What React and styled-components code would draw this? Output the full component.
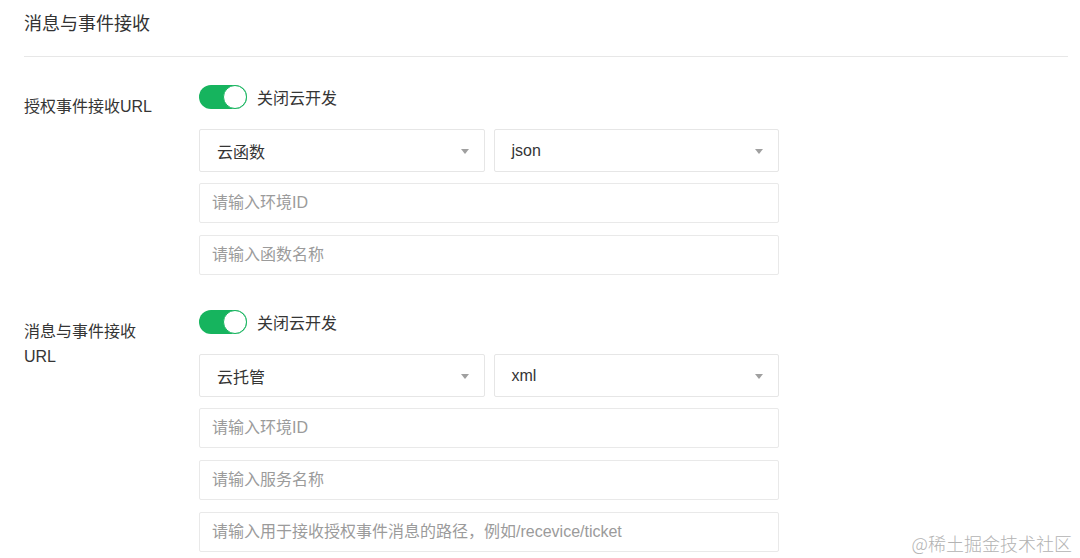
import styled, { createGlobalStyle } from 'styled-components';

const GlobalStyle = createGlobalStyle`
  html, body {
    margin: 0;
    padding: 0;
    background: #fff;
  }
  body {
    font-family: "Liberation Sans", "Noto Sans CJK SC", sans-serif;
    color: #353535;
    overflow: hidden;
  }
`;

const sections = [
  {
    id: 1,
    label: '授权事件接收URL',
    type: '云函数',
    format: 'json',
    inputs: ['请输入环境ID', '请输入函数名称'],
  },
  {
    id: 2,
    label: '消息与事件接收URL',
    type: '云托管',
    format: 'xml',
    inputs: ['请输入环境ID', '请输入服务名称', '请输入用于接收授权事件消息的路径，例如/recevice/ticket'],
    hint: '填写后，将通过云托管服务接收授权事件消息，路径需以 / 开头，请确保对应服务已部署并可以正常访问',
  },
];

const Toggle = ({ on }) => (
  <Switch $on={on}>
    <Knob />
  </Switch>
);

const Select = ({ value }) => (
  <SelectBox>
    <span>{value}</span>
    <Caret />
  </SelectBox>
);

const App = () => {
  return (
    <Page>
      <GlobalStyle />
      <Header>消息与事件接收</Header>
      <Form>
        {sections.map((s) => (
          <Row key={s.id}>
            <Label>{s.label}</Label>
            <Controls>
              <ToggleLine>
                <Toggle on />
                <span>关闭云开发</span>
              </ToggleLine>
              <SelectRow>
                <Select value={s.type} />
                <Select value={s.format} />
              </SelectRow>
              {s.inputs.map((p) => (
                <Input key={p} placeholder={p} />
              ))}
              {s.hint && <Hint>{s.hint}</Hint>}
            </Controls>
          </Row>
        ))}
      </Form>
      <Watermark>@稀土掘金技术社区</Watermark>
    </Page>
  );
};

const Page = styled.div`
  position: relative;
  height: 558px;
  padding: 0 12px 0 24px;
  box-sizing: border-box;
`;

const Header = styled.h2`
  margin: 0;
  padding: 10px 0 18px;
  line-height: 28px;
  font-size: 18px;
  font-weight: 400;
  color: #333;
  border-bottom: 1px solid #e7e7e7;
`;

const Form = styled.div`
  display: flex;
  flex-direction: column;
  gap: 35px;
  padding-top: 28px;
`;

const Row = styled.div`
  display: grid;
  grid-template-columns: 175px 580px;
`;

const Label = styled.div`
  margin-top: 9px;
  width: 136px;
  font-size: 16px;
  line-height: 25px;
  color: #353535;
`;

const Controls = styled.div`
  display: flex;
  flex-direction: column;
  gap: 12px;
`;

const ToggleLine = styled.div`
  display: flex;
  align-items: center;
  gap: 10px;
  height: 24px;
  margin-bottom: 8px;
  font-size: 16px;
  color: #353535;
`;

const Switch = styled.div`
  position: relative;
  width: 48px;
  height: 24px;
  border-radius: 12px;
  background: ${(p) => (p.$on ? '#16b45e' : '#dcdcdc')};
  display: flex;
  justify-content: ${(p) => (p.$on ? 'flex-end' : 'flex-start')};
  align-items: center;
  flex-shrink: 0;
`;

const Knob = styled.div`
  width: 24px;
  height: 24px;
  box-sizing: border-box;
  border-radius: 50%;
  background: #fff;
  border: 1px solid #16b45e;
`;

const SelectRow = styled.div`
  display: flex;
  gap: 9px;
  margin-bottom: -1px;
`;

const SelectBox = styled.div`
  flex: 1;
  height: 43px;
  box-sizing: border-box;
  border: 1px solid #e6e6e6;
  border-radius: 2px;
  display: flex;
  align-items: center;
  justify-content: space-between;
  padding: 0 15px 0 17px;
  font-size: 16px;
  color: #353535;
`;

const Caret = styled.i`
  width: 0;
  height: 0;
  margin-top: 2px;
  border-left: 4px solid transparent;
  border-right: 4px solid transparent;
  border-top: 5px solid #a0a0a0;
`;

const Input = styled.input`
  height: 40px;
  box-sizing: border-box;
  border: 1px solid #e9e9e9;
  border-radius: 2px;
  padding: 0 12px;
  font-family: inherit;
  font-size: 16px;
  color: #353535;
  outline: none;
  &::placeholder {
    color: #9b9b9b;
  }
`;

const Hint = styled.p`
  margin: -9px 0 0 16px;
  width: 860px;
  font-size: 14px;
  line-height: 20px;
  color: #a8a8a8;
  white-space: nowrap;
`;

const Watermark = styled.div`
  position: absolute;
  right: 8px;
  bottom: 3px;
  font-size: 18px;
  font-weight: 300;
  line-height: 24px;
  color: #b3b3b3;
  font-family: "Noto Sans CJK SC", sans-serif;
  background: rgba(255, 255, 255, 0.6);
`;

export default App;
